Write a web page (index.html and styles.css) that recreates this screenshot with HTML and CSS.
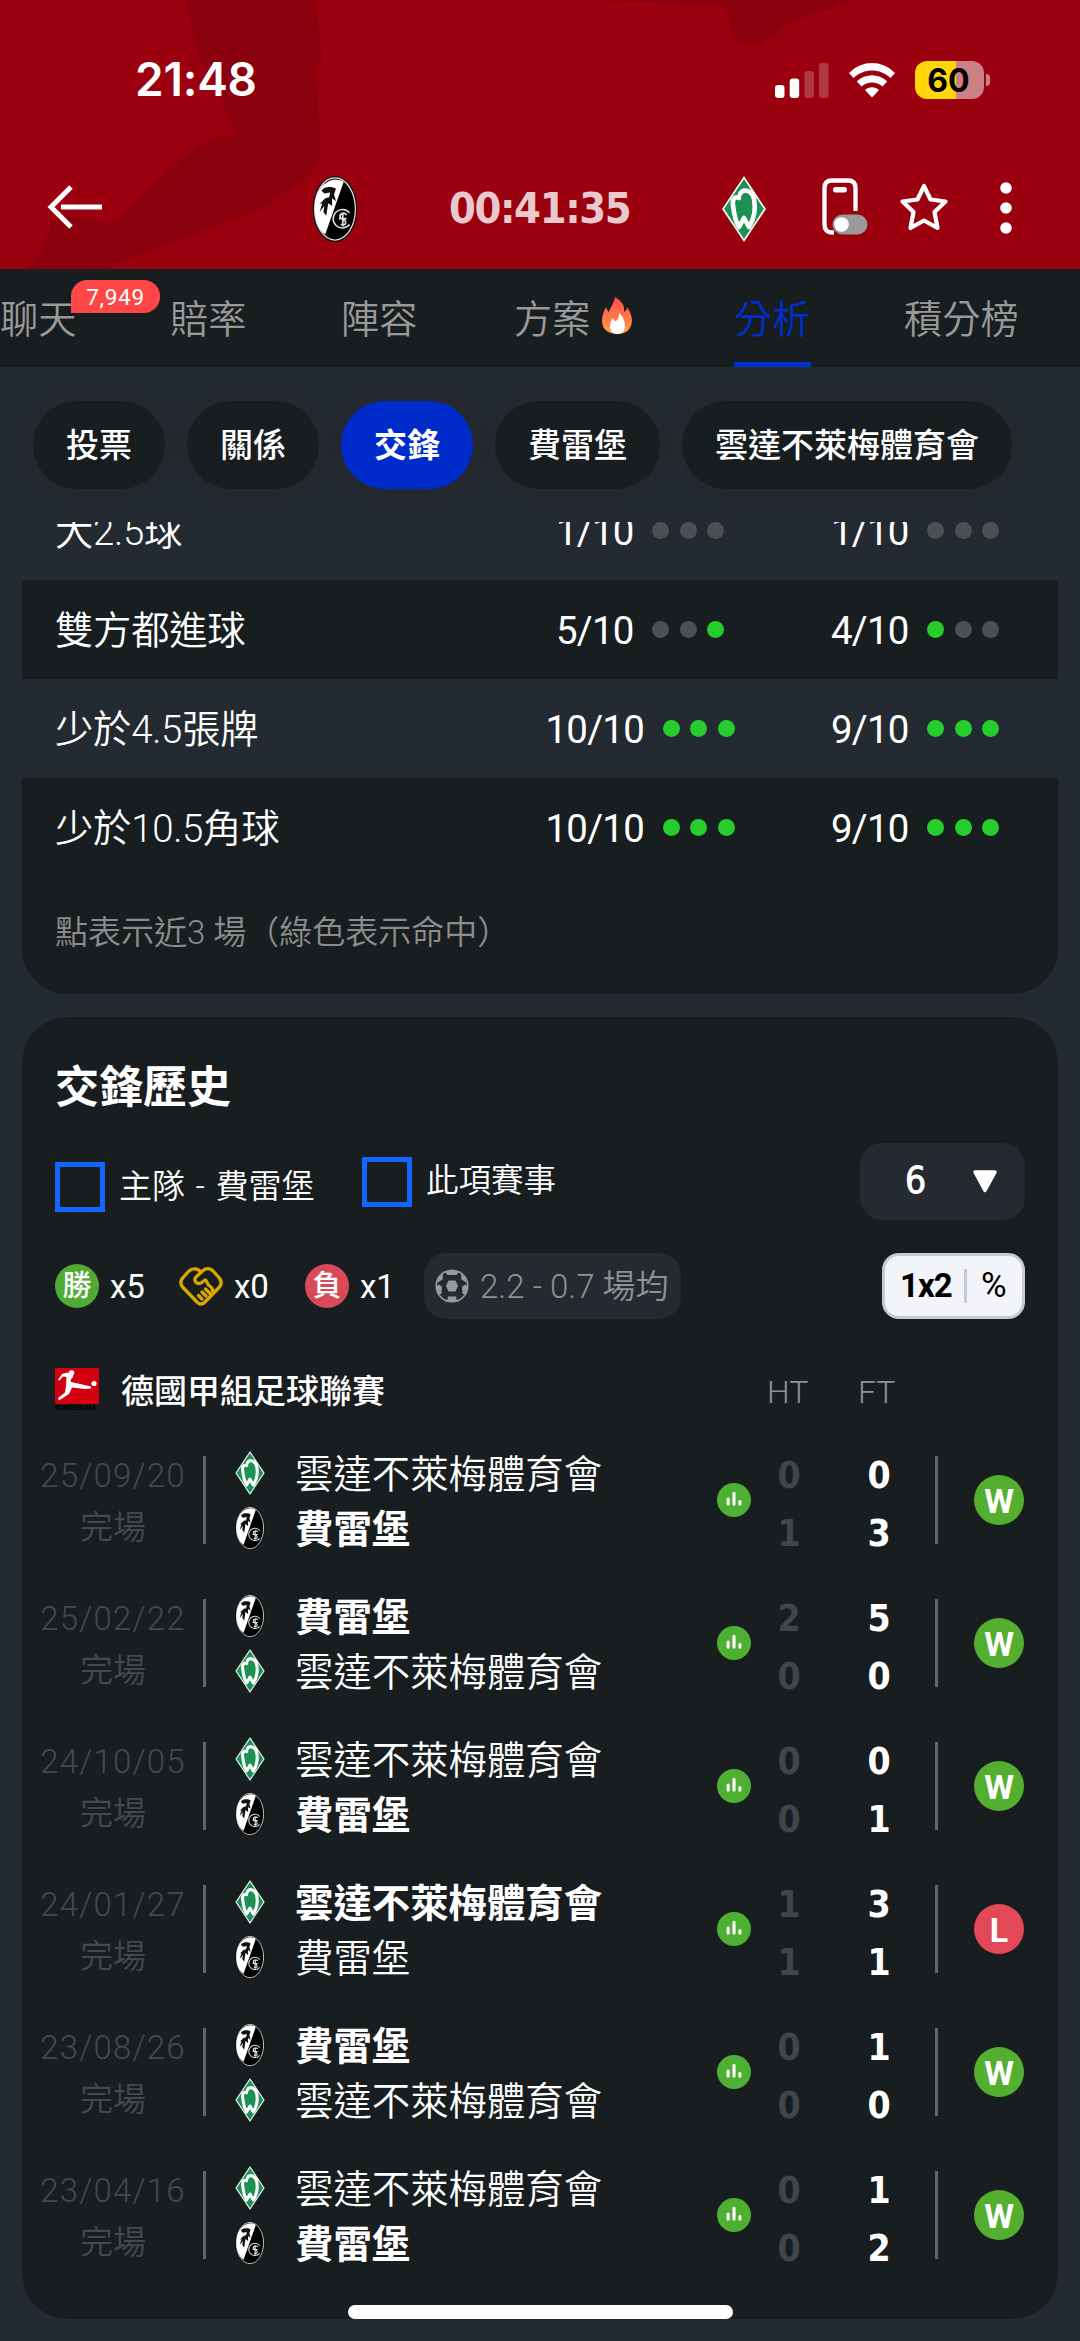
FILE: index.html
```html
<!DOCTYPE html>
<html lang="zh-Hant">

<head>
    <meta charset="utf-8">
    <meta name="viewport" content="width=device-width, initial-scale=1">
    <title>費雷堡 - 雲達不萊梅體育會</title>
    <link rel="stylesheet" href="styles.css">
</head>

<body>
<svg class="sprite">
    <symbol id="werder" viewBox="0 0 44 66">
        <path d="M22 0 44 33 22 66 0 33Z" fill="#cfe9dc"/>
        <path d="M22 2 42.600 33 22 64 1.400 33Z" fill="#1d9053" stroke="#fff" stroke-width="1.200"/>
        <path d="M17 22C13 20 10 23 11 29C12 38 13 45 17 51L22 42L27 51C32 43 34 33 32 23C30 14 21 12 18 18" fill="none" stroke="#fff" stroke-width="4.600" stroke-linejoin="round" stroke-linecap="round"/>
    </symbol>
    <symbol id="freiburg" viewBox="0 0 46 68">
        <ellipse cx="23" cy="34" rx="23" ry="34" fill="#111"/>
        <ellipse cx="23" cy="34" rx="21" ry="32" fill="#000" stroke="#ddd" stroke-width="1.300"/>
        <path d="M32 6C20-1 7 8 3 24C0 42 5 55 13 60Z" fill="#fff"/>
        <path d="M9 15C12 10 21 11 24 13L22 19L24 26L20 23L20 31L16 28L14 41L11 37L12 31L7 37L10 28L7 29L13 23L17 22L18 17L12 18Z" fill="#111"/>
        <path d="M38 38A9.500 9.500 0 1 0 38 50" fill="none" stroke="#ddd" stroke-width="1.600"/>
        <path d="M35 40C31 36 25 41 30 44C36 46 35 52 29 50M27 44H35M31 38V52" fill="none" stroke="#ddd" stroke-width="1.800"/>
    </symbol>
    <symbol id="bars" viewBox="0 0 33 33">
        <circle cx="16.500" cy="16.500" r="16.500" fill="#4db032"/>
        <path d="M10.800 15.500V20.500M16.500 10V20.500M22.200 18V20.500" stroke="#fff" stroke-width="3" stroke-linecap="round"/>
    </symbol>
</svg>

<header class="header">
    <svg class="header-bg" viewBox="0 0 1080 269">
        <path d="M186 0C190 22 194 45 201 62L211 65C216 92 226 110 236 135C205 134 180 160 150 189C128 211 118 224 104 223C92 223 80 213 66 215C52 218 50 222 51 229L48 233C48 238 41 240 44 246L27 269H110C160 242 220 228 273 204L271 200C300 184 319 175 320 150C320 120 317 90 315 64L322 62L316 0Z"/>
        <path d="M592 0C640 4 680 0 722 7C732 12 728 25 732 35C736 44 746 44 753 43C758 48 764 43 764 38C771 40 780 35 779 29L822 9C830 12 836 8 836 3C843 6 846 2 850 0Z"/>
    </svg>
    <div class="status">
        <span class="clock">21:48</span>
        <svg class="signal" width="54" height="35" viewBox="0 0 54 35" fill="#fff">
            <rect x="0" y="22" width="9.500" height="13" rx="3"/>
            <rect x="14.700" y="15.500" width="9.500" height="19.500" rx="3"/>
            <rect x="29.400" y="8" width="9.500" height="27" rx="3" opacity=".22"/>
            <rect x="44" y="0" width="9.500" height="35" rx="3" opacity=".22"/>
        </svg>
        <svg class="wifi" width="46" height="35" viewBox="0 0 46 35" fill="#fff">
            <path d="M0 10C13-3.300 33-3.300 46 10L41.500 15C31 5 15 5 4.500 15Z"/>
            <path d="M7.800 18.500C16 10 30 10 38.200 18.500L33.500 23.500C27.500 18 18.500 18 12.500 23.500Z"/>
            <path d="M16 27C20 23.300 26 23.300 30 27L24 33.500Q23 34.600 22 33.500Z"/>
        </svg>
        <div class="battery">60</div>
    </div>
    <div class="topbar">
        <svg class="back" width="56" height="44" viewBox="0 0 56 44" fill="none" stroke="#fff" stroke-width="5">
            <path d="M24 2 4 22 24 42M14 22H55"/>
        </svg>
        <svg class="home" width="46" height="66"><use href="#freiburg"/></svg>
        <span class="timer">00:41:35</span>
        <svg class="away" width="44" height="66"><use href="#werder"/></svg>
        <svg class="phone" width="46" height="58" viewBox="0 0 46 58">
            <path d="M12 54.500H10Q2.500 54.500 2.500 46V10Q2.500 2.500 10 2.500H26Q33.500 2.500 33.500 10V33" fill="none" stroke="#fff" stroke-width="4.300"/>
            <rect x="11" y="9" width="14" height="5.500" rx="2.700" fill="#fff"/>
            <rect x="10.500" y="36.500" width="35" height="20" rx="10" fill="#999"/>
            <circle cx="19.500" cy="46.500" r="7.300" fill="#fff"/>
        </svg>
        <svg class="star" width="50" height="50" viewBox="0 0 50 50">
            <path d="M25 4 31.500 17.500 46.500 19.500 35.500 30 38.500 46 25 38.500 11.500 46 14.500 30 3.500 19.500 18.500 17.500Z" fill="none" stroke="#fff" stroke-width="4.200" stroke-linejoin="round"/>
        </svg>
        <svg class="more" width="12" height="52" viewBox="0 0 12 52" fill="#fff">
            <circle cx="6" cy="6" r="5.800"/>
            <circle cx="6" cy="26" r="5.800"/>
            <circle cx="6" cy="46" r="5.800"/>
        </svg>
    </div>
</header>

<nav class="nav">
    <a class="nav-chat">聊天<span class="badge">7,949</span></a>
    <a class="nav-odds">賠率</a>
    <a class="nav-lineup">陣容</a>
    <a class="nav-tips">方案<svg class="fire" width="30" height="38" viewBox="0 0 30 38">
        <defs>
            <linearGradient id="flame" x1="0" y1="0" x2="0" y2="1">
                <stop offset="0" stop-color="#ff4b4b"/>
                <stop offset="1" stop-color="#ff9f45"/>
            </linearGradient>
        </defs>
        <path d="M13 0C20 4 23 9 22 15C24 14 25 12 25 10C28 14 30 19 30 24C29 33 24 37 15 37C6 37 0 32 0 24C0 18 2 14 4 10C5 13 6 14 7 15C9 9 12 6 13 0Z" fill="url(#flame)"/>
        <path d="M17 16C22 20 23 26 23 29C23 34 20 37 15.500 37C11 37 8 34 8 30C8 26 9 23 11 21C12 24 13 24 14 24C17 22 17 19 17 16Z" fill="#fff"/>
    </svg></a>
    <a class="nav-analysis active">分析</a>
    <a class="nav-table">積分榜</a>
</nav>

<div class="pills">
    <button class="pill">投票</button>
    <button class="pill">關係</button>
    <button class="pill selected">交鋒</button>
    <button class="pill">費雷堡</button>
    <button class="pill">雲達不萊梅體育會</button>
</div>

<main class="scroll">
    <section class="card trends">
        <div class="trend alt">
            <span>大2.5球</span>
            <div class="hits">1/10 <i></i><i></i><i></i></div>
            <div class="hits">1/10 <i></i><i></i><i></i></div>
        </div>
        <div class="trend">
            <span>雙方都進球</span>
            <div class="hits">5/10 <i></i><i></i><i class="on"></i></div>
            <div class="hits">4/10 <i class="on"></i><i></i><i></i></div>
        </div>
        <div class="trend alt">
            <span>少於4.5張牌</span>
            <div class="hits">10/10 <i class="on"></i><i class="on"></i><i class="on"></i></div>
            <div class="hits">9/10 <i class="on"></i><i class="on"></i><i class="on"></i></div>
        </div>
        <div class="trend">
            <span>少於10.5角球</span>
            <div class="hits">10/10 <i class="on"></i><i class="on"></i><i class="on"></i></div>
            <div class="hits">9/10 <i class="on"></i><i class="on"></i><i class="on"></i></div>
        </div>
        <p class="note">點表示近3 場（綠色表示命中）</p>
    </section>

    <section class="card history">
        <h2>交鋒歷史</h2>
        <div class="filters">
            <label class="check check-home"><span class="box"></span>主隊 - 費雷堡</label>
            <label class="check"><span class="box"></span>此項賽事</label>
            <div class="select"><span>6</span>
                <svg width="26" height="24" viewBox="0 0 26 24"><path d="M3 2H23L13 20.500Z" fill="#fff" stroke="#fff" stroke-width="3.500" stroke-linejoin="round"/></svg>
            </div>
        </div>
        <div class="summary">
            <span class="round win">勝</span><span class="count count-win">x5</span>
            <svg class="draw" width="44" height="40" viewBox="0 0 44 40" fill="none" stroke="#d9a900" stroke-width="3.300" stroke-linejoin="round" stroke-linecap="round">
                <path d="M22 6C18.500 2 13 2 10 5L4.500 11C1 14.500 1 18 4 21.500L18.500 36.500C20.500 38.500 23.500 38.500 25.500 36.500L40 21.500C43 18 43 14.500 39.500 11L34 5C31 2 27 2 24 4.500L17 11C14 14.500 18 19 22 17L26 14C28 14 27.500 17 30 19.500C33 21.500 34 23 33.500 25"/>
                <path d="M19.500 29.500 23 33M23 26 27 30M26.500 23 31 27.500"/>
            </svg>
            <span class="count count-draw">x0</span>
            <span class="round lose">負</span><span class="count count-lose">x1</span>
            <div class="average">
                <svg width="34" height="34" viewBox="0 0 34 34">
                    <circle cx="17" cy="17" r="15.800" fill="none" stroke="#999" stroke-width="1.600"/>
                    <path d="M13.500 11.500H20.500L23 17 20.500 22.500H13.500L11 17ZM10 3 17 1 24 3 21.500 6H12.500ZM1 17 4 15.500 7 18 6.500 25 3 25ZM33 17 30 15.500 27 18 27.500 25 31 25ZM12 32 13 27.500H21L22 32 17 33ZM3 9 8 5 7.500 10.500 2 14ZM31 9 26 5 26.500 10.500 32 14Z" fill="#999"/>
                </svg>
                <span>2.2 - 0.7 場均</span>
            </div>
            <div class="switch"><b>1x2</b><span>%</span></div>
        </div>
        <div class="league">
            <div class="league-logo">
                <svg width="44" height="36" viewBox="0 0 44 36">
                    <rect width="44" height="36" fill="#d3010f"/>
                    <circle cx="16.500" cy="5" r="2.800" fill="#fff"/>
                    <circle cx="39" cy="15.500" r="2.600" fill="#fff"/>
                    <path d="M3 12 7 6 12 4.500 18 7 18 9 15.500 12 16 14 23 15.500 36 18.500 36 20.500 30 21 17 19.500 14 26 4 32.500 3 30 10 24.500 11 18 11.500 9 8 8.500 4.500 12.500Z" fill="#fff"/>
                </svg>
                <span>BUNDESLIGA</span>
            </div>
            <span class="league-name">德國甲組足球聯賽</span>
            <span class="head-ht">HT</span>
            <span class="head-ft">FT</span>
        </div>

        <div class="match">
            <div class="when"><span>25/09/20</span><span>完場</span></div>
            <div class="teams">
                <div><svg><use href="#werder"/></svg>雲達不萊梅體育會</div>
                <div class="winner"><svg><use href="#freiburg"/></svg>費雷堡</div>
            </div>
            <svg class="stats"><use href="#bars"/></svg>
            <div class="score ht"><span>0</span><span>1</span></div>
            <div class="score ft"><span>0</span><span>3</span></div>
            <div class="result"><span class="w">W</span></div>
        </div>
        <div class="match">
            <div class="when"><span>25/02/22</span><span>完場</span></div>
            <div class="teams">
                <div class="winner"><svg><use href="#freiburg"/></svg>費雷堡</div>
                <div><svg><use href="#werder"/></svg>雲達不萊梅體育會</div>
            </div>
            <svg class="stats"><use href="#bars"/></svg>
            <div class="score ht"><span>2</span><span>0</span></div>
            <div class="score ft"><span>5</span><span>0</span></div>
            <div class="result"><span class="w">W</span></div>
        </div>
        <div class="match">
            <div class="when"><span>24/10/05</span><span>完場</span></div>
            <div class="teams">
                <div><svg><use href="#werder"/></svg>雲達不萊梅體育會</div>
                <div class="winner"><svg><use href="#freiburg"/></svg>費雷堡</div>
            </div>
            <svg class="stats"><use href="#bars"/></svg>
            <div class="score ht"><span>0</span><span>0</span></div>
            <div class="score ft"><span>0</span><span>1</span></div>
            <div class="result"><span class="w">W</span></div>
        </div>
        <div class="match">
            <div class="when"><span>24/01/27</span><span>完場</span></div>
            <div class="teams">
                <div class="winner"><svg><use href="#werder"/></svg>雲達不萊梅體育會</div>
                <div><svg><use href="#freiburg"/></svg>費雷堡</div>
            </div>
            <svg class="stats"><use href="#bars"/></svg>
            <div class="score ht"><span>1</span><span>1</span></div>
            <div class="score ft"><span>3</span><span>1</span></div>
            <div class="result"><span class="l">L</span></div>
        </div>
        <div class="match">
            <div class="when"><span>23/08/26</span><span>完場</span></div>
            <div class="teams">
                <div class="winner"><svg><use href="#freiburg"/></svg>費雷堡</div>
                <div><svg><use href="#werder"/></svg>雲達不萊梅體育會</div>
            </div>
            <svg class="stats"><use href="#bars"/></svg>
            <div class="score ht"><span>0</span><span>0</span></div>
            <div class="score ft"><span>1</span><span>0</span></div>
            <div class="result"><span class="w">W</span></div>
        </div>
        <div class="match">
            <div class="when"><span>23/04/16</span><span>完場</span></div>
            <div class="teams">
                <div><svg><use href="#werder"/></svg>雲達不萊梅體育會</div>
                <div class="winner"><svg><use href="#freiburg"/></svg>費雷堡</div>
            </div>
            <svg class="stats"><use href="#bars"/></svg>
            <div class="score ht"><span>0</span><span>0</span></div>
            <div class="score ft"><span>1</span><span>2</span></div>
            <div class="result"><span class="w">W</span></div>
        </div>
    </section>
</main>
<div class="home-indicator"></div>
</body>

</html>
```
FILE: styles.css
```css
* {
    box-sizing: border-box;
}

body {
    margin: 0;
    width: 1080px;
    height: 2341px;
    overflow: hidden;
    background: #242a31;
    color: #fff;
    font-family: Roboto, "Noto Sans CJK TC", sans-serif;
    font-size: 33px;
    line-height: 1.2;
}

svg {
    display: block;
    flex: none;
}

.sprite {
    position: absolute;
    width: 0;
    height: 0;
}

/* header */
.header {
    position: relative;
    height: 269px;
    background: #9b000e;
}

.header-bg {
    position: absolute;
    top: 0;
    left: 0;
    width: 1080px;
    height: 269px;
    fill: #8b000d;
}

.status {
    position: relative;
    display: flex;
    align-items: center;
    height: 160px;
    padding: 0 90px 0 135px;
}

.clock {
    width: 640px;
    font-family: Inter, sans-serif;
    font-size: 46px;
    font-weight: 600;
    letter-spacing: -.2px;
}

.wifi {
    margin-left: 20px;
}

.battery {
    position: relative;
    width: 69px;
    height: 38px;
    margin-left: 20px;
    border-radius: 12px;
    background: linear-gradient(90deg, #ffd60a 60%, #cd7f86 60%);
    color: #000;
    font: 700 32px/39px Inter, sans-serif;
    text-align: center;
    padding-right: 2px;
}

.battery::after {
    content: "";
    position: absolute;
    right: -6px;
    top: 13px;
    width: 4px;
    height: 12px;
    border-radius: 0 4px 4px 0;
    background: #cd7f86;
}

.topbar {
    position: relative;
    display: flex;
    align-items: center;
    height: 94px;
    padding-left: 47px;
}

.home {
    margin: 4px 0 0 209px;
}

.timer {
    width: 186px;
    margin: 3px 0 0 91px;
    color: #e9c9cd;
    font-family: "DejaVu Sans Condensed", "DejaVu Sans", sans-serif;
    font-stretch: condensed;
    font-weight: 700;
    font-size: 43px;
    letter-spacing: -1.4px;
    white-space: nowrap;
}

.away {
    margin: 4px 0 0 87px;
}

.phone {
    margin-left: 56px;
}

.star {
    margin-left: 31px;
}

.more {
    margin: 2px 0 0 51px;
}

/* tabs */
.nav {
    display: flex;
    height: 98px;
    background: #181d1f;
    color: #999;
    font-size: 38.2px;
    font-weight: 350;
    line-height: 102px;
    white-space: nowrap;
}

.nav-chat {
    position: relative;
    width: 170px;
}

.nav-odds {
    width: 171px;
}

.nav-lineup {
    width: 173px;
}

.nav-tips {
    display: flex;
    width: 220px;
}

.nav-analysis {
    width: 77px;
    margin-right: 93px;
}

.active {
    color: #002fcf;
    border-bottom: 5px solid #002fcf;
}

.badge {
    position: absolute;
    left: 71px;
    top: 11px;
    width: 89px;
    height: 33px;
    border-radius: 16px 16px 16px 0;
    background: #ff4747;
    color: #fff;
    font-size: 22.5px;
    font-weight: 400;
    line-height: 35px;
    letter-spacing: .7px;
    text-align: center;
}

.fire {
    margin: 28px 0 0 12px;
}

/* section pills */
.pills {
    display: flex;
    gap: 22px;
    height: 155px;
    padding: 34px 33px 0;
}

.pill {
    height: 88px;
    padding: 2px 33px 0;
    border: 0;
    border-radius: 44px;
    background: #181d1f;
    box-shadow: 0 0 16px rgba(36, 40, 40, .6);
    color: #fff;
    font: 500 33px/44px Roboto, "Noto Sans CJK TC", sans-serif;
    white-space: nowrap;
}

.selected {
    background: #002bcb;
    font-weight: 700;
}

/* scrolled content */
.scroll {
    height: 1819px;
    padding: 0 22px;
    overflow: hidden;
}

.card {
    overflow: hidden;
    border-radius: 46px;
    background: #181d1f;
}

.trends {
    height: 513px;
    margin-top: -41px;
    border-top-left-radius: 0;
    border-top-right-radius: 0;
}

.trend {
    display: grid;
    grid-template-columns: 448px 274px 276px;
    align-items: center;
    height: 99px;
    padding: 4px 0 0 33px;
    font-size: 38.4px;
}

.trend > span {
    font-weight: 350;
    letter-spacing: -.3px;
}

.alt {
    background: #242a31;
}

.hits {
    display: flex;
    justify-content: center;
    align-items: center;
    gap: 10.700px;
    letter-spacing: -.7px;
}

.hits i {
    width: 16.800px;
    height: 16.800px;
    margin-top: -4px;
    border-radius: 50%;
    background: #4d5052;
}

.hits i:first-of-type {
    margin-left: 8px;
}

.hits .on {
    background: #27cc2d;
}

.note {
    margin: 0;
    padding: 36px 33px;
    color: #8c8c8c;
    font-weight: 350;
}

/* head to head */
.history {
    height: 1302px;
    margin-top: 23px;
    padding: 0 0 0 33px;
}

.history h2 {
    height: 126px;
    margin: 0;
    padding-top: 44px;
    font-size: 44px;
    font-weight: 600;
    line-height: 54px;
}

.filters {
    display: flex;
    align-items: center;
    height: 77px;
}

.check {
    display: flex;
    align-items: center;
    gap: 14px;
    width: 300px;
    font-size: 32.5px;
    font-weight: 350;
    white-space: nowrap;
}

.check-home {
    width: 307px;
    padding-top: 10px;
    font-size: 33px;
    word-spacing: 2.500px;
}

.box {
    width: 50px;
    height: 50px;
    border: 5.500px solid #1267ff;
}

.select {
    display: flex;
    align-items: center;
    gap: 46px;
    width: 165px;
    height: 77px;
    margin-left: 198px;
    padding-left: 45px;
    border-radius: 22px;
    background: #242a30;
    font-family: "DejaVu Sans Condensed", "DejaVu Sans", sans-serif;
    font-stretch: condensed;
    font-size: 37px;
    -webkit-text-stroke: .8px #fff;
}

.summary {
    display: flex;
    align-items: center;
    height: 66px;
    margin-top: 33px;
}

.round {
    width: 44px;
    height: 44px;
    border-radius: 50%;
    font-size: 29px;
    font-weight: 500;
    line-height: 45px;
    text-align: center;
}

.win {
    background: #52aa36;
}

.lose {
    background: #d94a59;
}

.count {
    padding: 2px 0 0 11px;
    width: 80px;
}

.count-draw {
    width: 82px;
}

.count-lose {
    width: 75px;
}

.average {
    display: flex;
    align-items: center;
    gap: 11px;
    width: 257px;
    height: 66px;
    padding-left: 11px;
    border-radius: 22px;
    background: #242a30;
    color: #919191;
    font-weight: 350;
    white-space: nowrap;
}

.average span {
    padding-top: 2px;
}

.switch {
    display: flex;
    align-items: center;
    width: 143px;
    height: 66px;
    margin-left: 201px;
    padding-left: 15px;
    border: 3px solid #c6cad8;
    border-radius: 17px;
    background: #f3f4f9;
    color: #000;
}

.switch b {
    width: 64px;
    font-weight: 700;
    letter-spacing: -1px;
}

.switch span {
    padding-left: 14px;
    border-left: 3px solid #c6cad8;
    font-size: 35px;
    line-height: 34px;
}

.league {
    display: flex;
    align-items: center;
    height: 60px;
    margin-top: 42px;
    font-weight: 500;
}

.league-logo {
    width: 66px;
    height: 46px;
}

.league-logo span {
    display: block;
    width: 44px;
    color: #000;
    font: 700 7px/9px Roboto, sans-serif;
    letter-spacing: -.1px;
}

.league-name {
    width: 647px;
    padding-top: 2px;
}

.head-ht,
.head-ft {
    width: 91px;
    padding-top: 2px;
    color: #919191;
    font-weight: 350;
    font-size: 32px;
}

.head-ht {
    margin-left: -1px;
}

/* one fixture */
.match {
    display: flex;
    align-items: center;
    height: 110px;
    margin-bottom: 33px;
}

.league + .match {
    margin-top: 24px;
}

.when {
    display: flex;
    flex-direction: column;
    width: 152px;
    height: 88px;
    margin-left: -1px;
    border-right: 3px solid #636668;
    color: #45494b;
    font-weight: 350;
    line-height: 50px;
}

.when span {
    width: 152px;
    margin: -5px 0 0 -17px;
    letter-spacing: 1.200px;
    text-align: center;
}

.when span + span {
    margin-top: 2px;
    letter-spacing: 0;
}

.teams {
    width: 482px;
    margin-left: 29px;
    font-size: 38.400px;
    font-weight: 350;
}

.teams > div {
    display: flex;
    align-items: center;
    gap: 30px;
    height: 55px;
    padding-top: 6px;
}

.teams svg {
    width: 30px;
    height: 44px;
    margin-top: -6px;
}

.teams .winner {
    font-weight: 700;
}

.stats {
    width: 34px;
    height: 34px;
}

.score {
    width: 90px;
    padding-top: 9px;
    font-family: "DejaVu Sans Condensed", "DejaVu Sans", sans-serif;
    font-stretch: condensed;
    font-size: 37px;
    font-weight: 700;
    line-height: 57.500px;
    text-align: center;
}

.score span {
    display: block;
}

.ht {
    margin-left: -7px;
    color: #414547;
}

.result {
    width: 90px;
    height: 88px;
    margin-left: 11px;
    padding: 19px 0 0 36px;
    border-left: 3px solid #636668;
}

.result span {
    display: block;
    width: 50px;
    height: 50px;
    border-radius: 50%;
    font: 700 34px/53px Roboto, sans-serif;
    text-align: center;
}

.w {
    background: #54ae30;
}

.l {
    background: #e34857;
}

.home-indicator {
    position: absolute;
    left: 348px;
    top: 2305px;
    width: 385px;
    height: 14px;
    border-radius: 7px;
    background: #fff;
}
```
